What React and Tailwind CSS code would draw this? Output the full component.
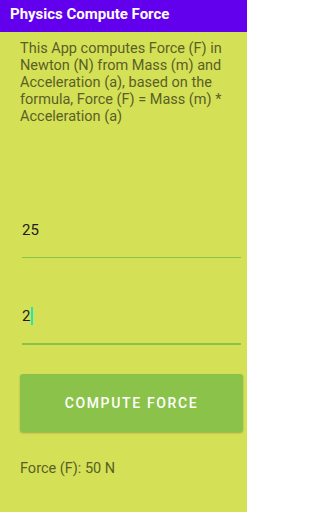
export default function App() {
  return (
    <div className="w-[247px] h-[512px] bg-[#d4e157] flex flex-col" style={{ fontFamily: 'Roboto, "Noto Sans", sans-serif' }}>
      {/* App bar */}
      <div className="h-[32px] bg-[#6200ee] flex items-center px-[10px] pb-[3px]">
        <span className="text-white text-[15px] font-bold leading-none">Physics Compute Force</span>
      </div>

      <div className="px-[20px] flex flex-col">
        <p className="mt-[8px] text-[14.5px] leading-[17px] text-[#5a6025]">
          This App computes Force (F) in Newton (N) from Mass (m) and Acceleration (a), based on the formula, Force (F) = Mass (m) * Acceleration (a)
        </p>

        {/* Mass input */}
        <div className="mt-[95px] ml-[2px] mr-[-14px] flex flex-col">
          <div className="h-[20px] flex items-center text-[15px] text-[#1d1d1d]">25</div>
          <div className="h-[17px]" />
          <div className="h-px bg-[#8bc34a]" />
        </div>

        {/* Acceleration input */}
        <div className="mt-[48px] ml-[2px] mr-[-14px] flex flex-col">
          <div className="h-[20px] flex items-center text-[15px] text-[#1d1d1d]">
            2<span className="w-[1.5px] h-[18px] bg-[#1de9b6] ml-px" />
          </div>
          <div className="h-[17px]" />
          <div className="h-[2px] bg-[#8bc34a]" />
        </div>

        <button className="mt-[29px] mr-[-16px] h-[58px] rounded-[3px] bg-[#8bc34a] shadow-[0_1px_2px_rgba(0,0,0,0.25)] text-white text-[14px] font-medium tracking-[1.65px]">
          COMPUTE FORCE
        </button>

        <p className="mt-[28px] text-[14.5px] leading-[17px] text-[#5a6025]">Force (F): 50 N</p>
      </div>
    </div>
  )
}
